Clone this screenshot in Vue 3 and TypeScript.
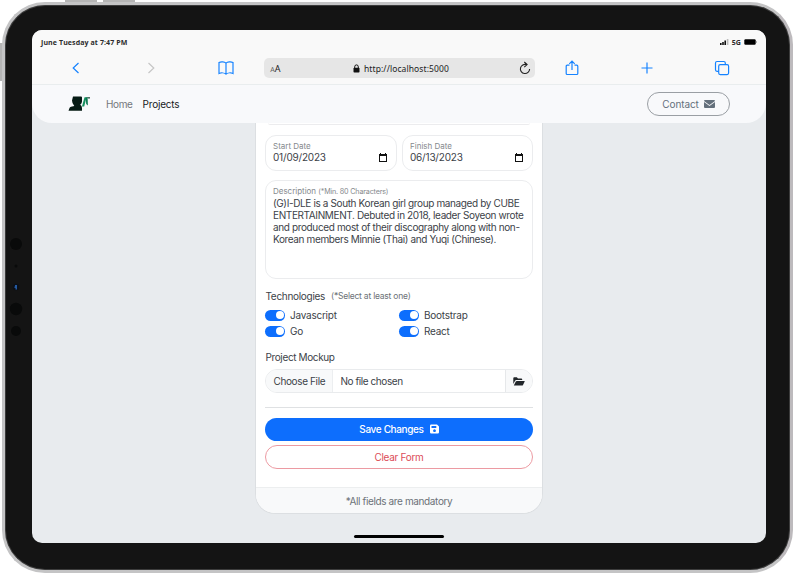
<script setup lang="ts">
import { ref } from 'vue'

interface Tech {
  name: string
  on: boolean
}

const techs = ref<Tech[]>([
  { name: 'Javascript', on: true },
  { name: 'Bootstrap', on: true },
  { name: 'Go', on: true },
  { name: 'React', on: true },
])

const dates = [
  { label: 'Start Date', value: '01/09/2023' },
  { label: 'Finish Date', value: '06/13/2023' },
]

const description = [
  '(G)I-DLE is a South Korean girl group managed by CUBE',
  'ENTERTAINMENT. Debuted in 2018, leader Soyeon wrote',
  'and produced most of their discography along with non-',
  'Korean members Minnie (Thai) and Yuqi (Chinese).',
]
</script>

<template>
  <div class="stage">
    <i class="key key-a"></i>
    <i class="key key-b"></i>
    <i class="key key-side"></i>
    <div class="device">
      <svg class="sensors" width="16" height="110" viewBox="0 0 16 110">
        <circle cx="8" cy="9" r="6" fill="#090a0a" />
        <circle cx="8" cy="31" r="1.5" fill="#090a0a" />
        <circle cx="8" cy="52" r="3.2" fill="#0b1018" />
        <path d="M7 50h2v4.500H7.500V53H6.500v-1.500H7z" fill="#2459a0" />
        <circle cx="8" cy="74" r="6.2" fill="#090a0a" />
        <circle cx="8" cy="96" r="5" fill="#090a0a" />
      </svg>
      <div class="screen">
        <header class="browser">
          <div class="status">
            <span class="clock">June Tuesday at 7:47 PM</span>
            <span class="signal">
              <svg width="9" height="6" viewBox="0 0 9 6">
                <path d="M0 4h1.600v2H0zM2.200 3h1.600v3H2.200zM4.400 1.600H6V6H4.400z" fill="#111" />
                <path d="M6.800 0h1.600v6H6.800z" fill="#bbb" />
              </svg>
              <span class="net">5G</span>
              <svg width="13" height="6" viewBox="0 0 13 6">
                <rect x="0.300" y="0.300" width="11.400" height="5.400" rx="1.200" fill="#000" />
                <path d="M12.300 2v2" stroke="#777" stroke-width="0.700" />
              </svg>
            </span>
          </div>
          <div class="toolbar">
            <svg class="ico" viewBox="0 0 16 16"><path d="M10.500 3 5.200 8l5.300 5" /></svg>
            <svg class="ico off" viewBox="0 0 16 16"><path d="M5.500 3 10.800 8l-5.300 5" /></svg>
            <svg class="ico" viewBox="0 0 16 16">
              <path d="M8 3.200C6.500 1.700 3 1.600 1 2.500v11c2-.8 5.500-.8 7 .700 1.500-1.500 5-1.500 7-.700v-11c-2-.9-5.500-.8-7 .700zM8 3.200v11" />
            </svg>
            <div class="address">
              <span class="aa"><small>A</small>A</span>
              <span class="url">
                <svg width="7" height="9" viewBox="0 0 7 9">
                  <rect x="0.500" y="3.800" width="6" height="4.700" rx="0.800" fill="#111" />
                  <path d="M1.700 4.200V2.800a1.800 1.900 0 0 1 3.600 0v1.400" fill="none" stroke="#111" />
                </svg>
                http://localhost:5000
              </span>
              <svg class="reload" width="12" height="14" viewBox="0 0 12 14">
                <path d="M7.500 3.600A4.600 4.600 0 1 0 10.600 8M5.300 1l2.800 2.600-2.800 2.600" fill="none" stroke="#222" stroke-width="1.100" />
              </svg>
            </div>
            <svg class="ico" viewBox="0 0 16 16">
              <path d="M5.500 5.200H3.200q-1 0-1 1v7.300q0 1 1 1h9.600q1 0 1-1V6.200q0-1-1-1h-2.300M8 10V1.200M5.300 3.900 8 1.200l2.700 2.700" />
            </svg>
            <svg class="ico" viewBox="0 0 16 16"><path d="M8 2.500v11M2.500 8h11" /></svg>
            <svg class="ico" viewBox="0 0 16 16">
              <rect x="4.700" y="4.700" width="9.900" height="9.900" rx="1.500" />
              <path d="M4.700 11.300H3q-1.500 0-1.500-1.500V3Q1.500 1.500 3 1.500h6.800q1.500 0 1.500 1.500v1.700" />
            </svg>
          </div>
        </header>

        <nav class="nav">
          <svg class="logo" width="23" height="16" viewBox="0 0 23 16">
            <path d="M5 .600h8q1 0 1 1v4q0 2.100-1.800 3.200 1.800.7 1.800 3.100v2.800H.500l1-2.700q.3-.9 1.500-1.200l3.300-.900Q4 7.500 4 4.600z" fill="#061b15" />
            <path d="M14 10.500 16.500 1.200h2.100l-2.400 9.300z" fill="#15905f" />
            <path d="M17.800 1.200h1.800l.3 8.300-1.700-1.500z" fill="#0a7850" />
            <path d="M18.800 1.200l3.200.1-.1 1.200h-1.500z" fill="#173f30" />
          </svg>
          <a class="link">Home</a>
          <a class="link active">Projects</a>
          <a class="contact">
            <span>Contact</span>
            <svg width="11" height="8" viewBox="0 0 11 8">
              <path d="M1 0h9q1 0 1 1L5.500 5 0 1q0-1 1-1zM0 2.100l5.500 4 5.500-4V7q0 1-1 1H1Q0 8 0 7z" fill="#64707c" />
            </svg>
          </a>
        </nav>

        <main class="content">
          <section class="card">
            <div class="previous"></div>
            <div class="dates">
              <div v-for="d in dates" :key="d.label" class="field date">
                <span class="label">{{ d.label }}</span>
                <span class="value">{{ d.value }}</span>
                <svg class="cal" width="8" height="9" viewBox="0 0 8 9">
                  <path d="M0 1h1V0h1v1h4V0h1v1h1v8H0zM1 3v5h6V3z" fill="#111" fill-rule="evenodd" />
                </svg>
              </div>
            </div>
            <div class="field description">
              <span class="label desc-label">Description <small>(*Min. 80 Characters)</small></span>
              <p class="text">
                <span v-for="line in description" :key="line">{{ line }}</span>
              </p>
            </div>
            <div class="heading techs-title">
              <span>Technologies</span><small>(*Select at least one)</small>
            </div>
            <div class="techs">
              <label v-for="t in techs" :key="t.name" class="tech" @click="t.on = !t.on">
                <i class="switch" :class="{ on: t.on }"></i>{{ t.name }}
              </label>
            </div>
            <div class="heading mockup-title">Project Mockup</div>
            <div class="file">
              <span class="choose">Choose File</span>
              <span class="chosen">No file chosen</span>
              <span class="folder">
                <svg width="12" height="9" viewBox="0 0 12 9">
                  <path d="M.3 7V1.200Q.3.300 1.200.300h2.600l1.200 1.100h3.300q.9 0 .9.900v.800H3.300q-.8 0-1.200.7zM.8 8.500l2-4q.3-.6 1-.6h7.500q.7 0 .4.600l-1.700 3.400q-.3.600-1 .6z" fill="#212529" />
                </svg>
              </span>
            </div>
            <hr class="rule" />
            <button class="btn save">
              <span>Save Changes</span>
              <svg width="9" height="10" viewBox="0 0 9 10">
                <path d="M1.200.500h5.800l2 2v5.800q0 1.200-1.200 1.200H1.200Q0 9.500 0 8.300V1.700Q0 .5 1.200.5zM1.500 1.900v2H6.300v-2zM4.500 5.300a1.400 1.400 0 1 0 .01 0z" fill="#fff" fill-rule="evenodd" />
              </svg>
            </button>
            <button class="btn clear">Clear Form</button>
            <footer class="foot">*All fields are mandatory</footer>
          </section>
        </main>
        <i class="home-bar"></i>
      </div>
    </div>
  </div>
</template>

<style>
body {
  background: #fff;
  overflow: hidden;
}
</style>

<style scoped>
* {
  box-sizing: border-box;
}
.stage {
  position: relative;
  width: 793px;
  height: 573px;
  padding: 2px 0 0 2px;
  overflow: hidden;
  font-family: Inter, 'Liberation Sans', sans-serif;
  font-size: 10px;
  color: #3c4248;
}
.key {
  position: absolute;
  top: 0;
  width: 32px;
  height: 3px;
  background: #b5b5b5;
  border-bottom: 1px solid #777;
}
.key-a { left: 65px; }
.key-b { left: 103px; }
.key-side {
  top: 43px;
  left: 0;
  width: 3px;
  height: 38px;
  border: 0;
}
.device {
  position: relative;
  width: 791px;
  height: 571px;
  padding: 25px 25px 25px 27px;
  background: #141414;
  border: 3px solid #c4c4c5;
  border-right-color: #bdbabd;
  border-radius: 43px;
  box-shadow: inset 0 0 0 1px #3c3c3c;
}
.sensors {
  position: absolute;
  left: 3px;
  top: 230px;
}
.screen {
  position: relative;
  width: 734px;
  height: 513px;
  border-radius: 10px;
  overflow: hidden;
  background: #e8ebee;
  display: flex;
  flex-direction: column;
  letter-spacing: -0.37px;
}
.browser {
  height: 55px;
  background: #f9f9f9;
  border-bottom: 1px solid #e9edee;
  letter-spacing: 0.1px;
}
.status {
  height: 24px;
  padding: 0 9px 0 9px;
  display: flex;
  align-items: center;
  justify-content: space-between;
  font-family: 'Open Sans', 'Noto Sans', sans-serif;
  font-weight: 700;
  font-size: 7px;
  color: #2c2c2c;
}
.signal {
  display: flex;
  align-items: center;
  gap: 3px;
}
.toolbar {
  height: 28px;
  padding: 0 35.500px 0 36px;
  display: flex;
  align-items: center;
  justify-content: space-between;
}
.ico {
  width: 16px;
  height: 16px;
  fill: none;
  stroke: #1683ff;
  stroke-width: 1.2;
}
.ico.off { stroke: #c6c6c6; }
.address {
  width: 271px;
  height: 20px;
  margin: 0 -30px 0 -29px;
  padding: 0 4px 0 6px;
  border-radius: 5px;
  background: #e6e6e6;
  display: flex;
  align-items: center;
  justify-content: space-between;
  font-family: 'Noto Sans', sans-serif;
  color: #222;
}
.aa { font-size: 9px; }
.aa small { font-size: 7px; color: #666; }
.url {
  display: flex;
  align-items: center;
  gap: 4px;
  padding-left: 2px;
  font-size: 8.500px;
}
.nav {
  height: 38px;
  padding: 0 36px 1px 36px;
  display: flex;
  align-items: center;
  background: #f8f9fb;
  border-radius: 0 0 20px 20px;
  position: relative;
}
.link {
  margin-left: 15px;
  color: #74787c;
}
.link + .link {
  margin-left: 10px;
  letter-spacing: -0.2px;
}
.link.active { color: #16191c; }
.contact {
  width: 83px;
  height: 24px;
  margin-left: auto;
  border: 1px solid #9a9fa4;
  border-radius: 12px;
  display: flex;
  align-items: center;
  justify-content: center;
  gap: 5px;
  color: #64707c;
  letter-spacing: -0.1px;
}
.content {
  display: flex;
  justify-content: center;
}
.card {
  width: 288px;
  height: 391px;
  padding: 0 9px;
  background: #fff;
  border: 1px solid #dcdfe2;
  border-top: 0;
  border-radius: 0 0 20px 20px;
  overflow: hidden;
  display: flex;
  flex-direction: column;
}
.previous {
  flex: none;
  height: 2px;
  margin: 0 3px;
  border-bottom: 1px solid #ececee;
  border-radius: 0 0 12px 12px;
}
.dates {
  margin-top: 10px;
  display: grid;
  grid-template-columns: 132px 131px;
  gap: 5px;
}
.field {
  border: 1px solid #ebecee;
  border-radius: 11px;
  padding: 6px 7px;
  display: flex;
  flex-direction: column;
}
.date {
  position: relative;
  height: 36px;
  padding-top: 5px;
}
.label {
  font-size: 8px;
  line-height: 10px;
  color: #85898d;
  letter-spacing: 0;
}
.desc-label { letter-spacing: -0.02px; }
.label small {
  font-size: 7.200px;
  letter-spacing: -0.18px;
}
.value {
  line-height: 13px;
  letter-spacing: -0.2px;
}
.cal {
  position: absolute;
  right: 9px;
  top: 17px;
}
.description {
  height: 99px;
  margin-top: 9px;
  padding-top: 5px;
}
.text {
  margin: 0;
  line-height: 12px;
  display: flex;
  flex-direction: column;
  white-space: nowrap;
}
.heading {
  line-height: 14px;
}
.techs-title {
  margin-top: 10px;
  padding-left: 0.500px;
  display: flex;
  gap: 6px;
}
.techs-title > span { letter-spacing: -0.3px; }
.techs-title small {
  font-size: 8.500px;
  color: #6c7278;
  letter-spacing: -0.22px;
}
.techs {
  margin-top: 4px;
  display: grid;
  grid-template-columns: 134px 133px;
  grid-auto-rows: 16px;
}
.tech {
  display: flex;
  align-items: center;
  gap: 5px;
  letter-spacing: -0.24px;
}
.switch {
  width: 20px;
  height: 11px;
  padding: 1.500px;
  border-radius: 6px;
  background: #adb5bd;
  display: flex;
}
.switch::before {
  content: '';
  width: 8px;
  height: 8px;
  border-radius: 50%;
  background: #fff;
}
.switch.on {
  background: #0d6efd;
  justify-content: flex-end;
}
.mockup-title {
  margin-top: 11px;
  padding-left: 0.500px;
}
.file {
  height: 24px;
  margin-top: 5px;
  border: 1px solid #e9ebed;
  border-radius: 12px;
  overflow: hidden;
  display: flex;
  line-height: 23px;
}
.choose {
  width: 67px;
  padding-left: 7.500px;
  background: #f8f9fa;
  border-right: 1px solid #eceef0;
  white-space: nowrap;
}
.chosen {
  flex: 1;
  padding-left: 7.500px;
  letter-spacing: -0.43px;
}
.folder {
  width: 27px;
  background: #f8f9fa;
  border-left: 1px solid #e6e8ea;
  display: flex;
  align-items: center;
  justify-content: center;
}
.rule {
  width: 100%;
  height: 1px;
  margin: 14px 0 9.500px;
  border: 0;
  background: #dfe1e3;
  flex: none;
}
.btn {
  width: 100%;
  height: 24px;
  flex: none;
  padding: 0;
  border: 0;
  border-radius: 12px;
  font: inherit;
  letter-spacing: -0.3px;
  display: flex;
  align-items: center;
  justify-content: center;
}
.save {
  height: 23.500px;
  gap: 6px;
  background: #0d6efd;
  color: #fff;
  font-weight: 500;
  letter-spacing: -0.36px;
}
.clear {
  margin-top: 4px;
  background: #fff;
  border: 1px solid #ec9aa2;
  color: #dc4c58;
}
.foot {
  height: 26px;
  margin: auto -9px 0;
  background: #f8f9fa;
  border-top: 1px solid #eceeef;
  line-height: 26px;
  text-align: center;
  color: #6c7278;
}
.home-bar {
  position: absolute;
  left: 322px;
  bottom: 5px;
  width: 90px;
  height: 3px;
  border-radius: 2px;
  background: #000;
}
</style>
